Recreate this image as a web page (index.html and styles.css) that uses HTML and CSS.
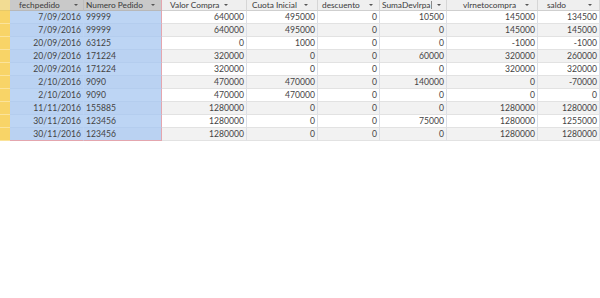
FILE: index.html
```html
<!DOCTYPE html>
<html>
<head>
<meta charset="utf-8">
<link rel="stylesheet" href="styles.css">
</head>
<body>
<div class="sheet">
  <div class="row head">
    <div class="corner"></div>
    <div class="h hs h1"><span class="lbl">fechpedido</span><span class="arr"></span></div>
    <div class="h hs h2 edge"><span class="lbl">Numero Pedido</span><span class="arr"></span></div>
    <div class="h h3"><span class="lbl">Valor Compra</span><span class="arr"></span></div>
    <div class="h h4"><span class="lbl">Cuota Inicial</span><span class="arr"></span></div>
    <div class="h h5"><span class="lbl">descuento</span><span class="arr"></span></div>
    <div class="h h6"><span class="lbl">SumaDevlrpa<span class="bar"></span></span><span class="arr"></span></div>
    <div class="h h7"><span class="lbl">vlrnetocompra</span><span class="arr"></span></div>
    <div class="h h8"><span class="lbl">saldo</span><span class="arr"></span></div>
  </div>

  <div class="row">
    <div class="rs"></div><div class="c b r">7/09/2016</div><div class="c b l edge">99999</div>
    <div class="c n r">640000</div><div class="c n r">495000</div><div class="c n r">0</div><div class="c n r">10500</div><div class="c n r">145000</div><div class="c n r">134500</div>
  </div>
  <div class="row even">
    <div class="rs"></div><div class="c b r">7/09/2016</div><div class="c b l edge">99999</div>
    <div class="c n r">640000</div><div class="c n r">495000</div><div class="c n r">0</div><div class="c n r">0</div><div class="c n r">145000</div><div class="c n r">145000</div>
  </div>
  <div class="row">
    <div class="rs"></div><div class="c b r">20/09/2016</div><div class="c b l edge">63125</div>
    <div class="c n r">0</div><div class="c n r">1000</div><div class="c n r">0</div><div class="c n r">0</div><div class="c n r">-1000</div><div class="c n r">-1000</div>
  </div>
  <div class="row even">
    <div class="rs"></div><div class="c b r">20/09/2016</div><div class="c b l edge">171224</div>
    <div class="c n r">320000</div><div class="c n r">0</div><div class="c n r">0</div><div class="c n r">60000</div><div class="c n r">320000</div><div class="c n r">260000</div>
  </div>
  <div class="row">
    <div class="rs"></div><div class="c b r">20/09/2016</div><div class="c b l edge">171224</div>
    <div class="c n r">320000</div><div class="c n r">0</div><div class="c n r">0</div><div class="c n r">0</div><div class="c n r">320000</div><div class="c n r">320000</div>
  </div>
  <div class="row even">
    <div class="rs"></div><div class="c b r">2/10/2016</div><div class="c b l edge">9090</div>
    <div class="c n r">470000</div><div class="c n r">470000</div><div class="c n r">0</div><div class="c n r">140000</div><div class="c n r">0</div><div class="c n r">-70000</div>
  </div>
  <div class="row">
    <div class="rs"></div><div class="c b r">2/10/2016</div><div class="c b l edge">9090</div>
    <div class="c n r">470000</div><div class="c n r">470000</div><div class="c n r">0</div><div class="c n r">0</div><div class="c n r">0</div><div class="c n r">0</div>
  </div>
  <div class="row even">
    <div class="rs"></div><div class="c b r">11/11/2016</div><div class="c b l edge">155885</div>
    <div class="c n r">1280000</div><div class="c n r">0</div><div class="c n r">0</div><div class="c n r">0</div><div class="c n r">1280000</div><div class="c n r">1280000</div>
  </div>
  <div class="row">
    <div class="rs"></div><div class="c b r">30/11/2016</div><div class="c b l edge">123456</div>
    <div class="c n r">1280000</div><div class="c n r">0</div><div class="c n r">0</div><div class="c n r">75000</div><div class="c n r">1280000</div><div class="c n r">1255000</div>
  </div>
  <div class="row even last">
    <div class="rs"></div><div class="c b r">30/11/2016</div><div class="c b l edge">123456</div>
    <div class="c n r">1280000</div><div class="c n r">0</div><div class="c n r">0</div><div class="c n r">0</div><div class="c n r">1280000</div><div class="c n r">1280000</div>
  </div>
</div>
</body>
</html>
```

FILE: styles.css
```css
html, body {
  margin: 0;
  padding: 0;
  background: #ffffff;
}

.sheet {
  display: grid;
  grid-template-columns: 10px 74px 78px 85px 71px 62px 67px 91px 62px;
  grid-template-rows: 11px;
  grid-auto-rows: 13px;
  width: 600px;
  font-family: Lato, "Liberation Sans", sans-serif;
  font-size: 8.6px;
  color: #444444;
}

.row {
  display: contents;
}

.corner {
  background: #f2dc93;
  border-bottom: 1px solid #e7c969;
}

.h {
  box-sizing: border-box;
  display: flex;
  align-items: center;
  justify-content: space-between;
  background: #efefef;
  border-right: 1px solid #d6d6d6;
  border-bottom: 1px solid #cfcfcf;
  line-height: 10px;
  font-size: 8.3px;
  white-space: nowrap;
  color: #3a3a3a;
}

.h.hs {
  background: #c9c9c9;
  border-right-color: #bdbdbd;
  border-bottom-color: #b8b8b8;
}

.lbl {
  display: flex;
  align-items: center;
}

.bar {
  display: inline-block;
  width: 1px;
  height: 8px;
  margin-left: 1px;
  background: #8a8a8a;
}

.arr {
  width: 0;
  height: 0;
  border-left: 2px solid transparent;
  border-right: 2px solid transparent;
  border-top: 2px solid #555;
  flex: none;
}

.h1 { padding: 0 5px 0 9px; }
.h2 { padding: 0 6px 0 2px; }
.h3 { padding: 0 18px 0 8px; }
.h4 { padding: 0 9px 0 5px; }
.h5 { padding: 0 6px 0 4px; }
.h6 { padding: 0 5px 0 2px; }
.h7 { padding: 0 8px 0 16px; }
.h8 { padding: 0 7px 0 9px; }

.rs {
  background: #f8d467;
  border-bottom: 1px solid #fbe39a;
}

.c {
  box-sizing: border-box;
  line-height: 12px;
  white-space: nowrap;
  border-bottom: 1px solid #e2e2e2;
  border-right: 1px solid #dcdfe6;
}

.r {
  text-align: right;
  padding: 0 2px 0 0;
}

.l {
  text-align: left;
  padding: 0 0 0 2px;
}

.b {
  background: #bdd5f4;
  border-right-color: #bdd5f4;
  border-bottom-color: #b4cdee;
}

.even .b {
  background: #bad2f2;
}

.even .n {
  background: #f2f2f2;
}

.edge {
  border-right: 1px solid #e4a6ae;
}

.h.edge {
  border-right: 1px solid #e4a6ae;
}

.last .b {
  border-bottom: 1px solid #e4a6ae;
}
```
